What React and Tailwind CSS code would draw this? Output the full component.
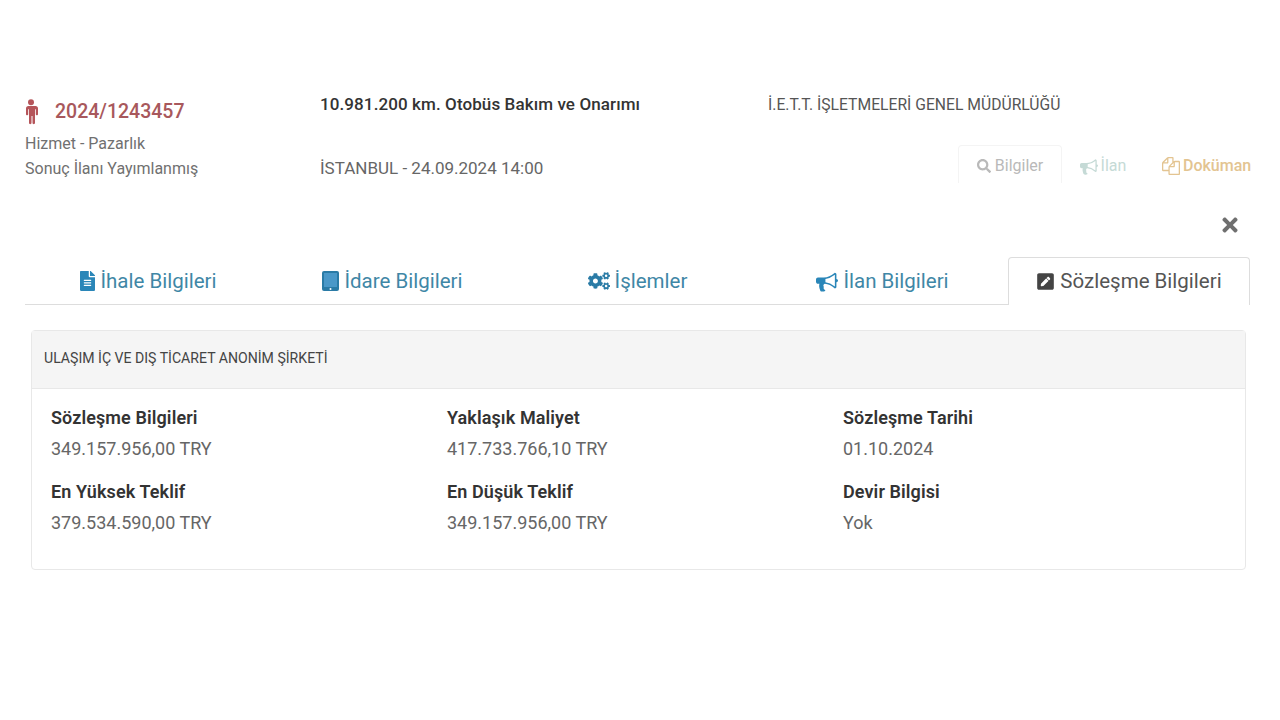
import React from "react";
import { FaFileAlt, FaCogs, FaPenSquare, FaSearch, FaTimes } from "react-icons/fa";

// font awesome 4 shapes, react-icons only ships the newer ones
const BULLHORN = "M1664 736q53 0 90.5 37.5t37.5 90.5-37.5 90.5-90.5 37.5v384q0 52-38 90t-90 38q-417-347-812-380-58 19-91 66t-31 100.5 40 92.5q-20 33-23 65.5t6 58 33.5 55 48 50 61.5 50.5q-29 58-111.5 83t-168.5 11.5-132-55.5q-7-23-29.5-87.5t-32-94.5-23-89-15-101 3.5-98.5 22-110.5h-122q-66 0-113-47t-47-113v-192q0-66 47-113t113-47h480q435 0 896-384 52 0 90 38t38 90v384zm-128 604v-954q-394 302-768 343v270q377 42 768 341z";
const FILES = "M1696 384q40 0 68 28t28 68v1216q0 40-28 68t-68 28h-960q-40 0-68-28t-28-68v-288h-544q-40 0-68-28t-28-68v-672q0-40 20-88t48-76l408-408q28-28 76-48t88-20h416q40 0 68 28t28 68v328q68-40 128-40h416zm-544 213l-299 299h299v-299zm-640-384l-299 299h299v-299zm196 647l316-316v-416h-384v416q0 40-28 68t-68 28h-416v640h512v-256q0-40 20-88t48-76zm956 804v-1152h-384v416q0 40-28 68t-68 28h-416v640h896z";

const Bullhorn = ({ className }) => (
  <svg viewBox="0 0 1792 1792" fill="currentColor" className={className}>
    <path d={BULLHORN} />
  </svg>
);

const Files = ({ className }) => (
  <svg viewBox="0 0 1792 1792" fill="currentColor" className={className}>
    <path d={FILES} />
  </svg>
);

const Male = ({ className }) => (
  <svg viewBox="0 0 16 26" fill="currentColor" className={className}>
    <circle cx="8" cy="3.2" r="3" />
    <path d="M3.5 7h9c1.6 0 2.5 1 2.5 2.5v5.7c0 1.500-2.200 1.500-2.200 0v-5h-.8v13.900c0 1.500-2.500 1.500-2.500 0v-7h-1v7c0 1.500-2.500 1.500-2.500 0v-13.900h-.8v5c0 1.500-2.200 1.500-2.200 0v-5.700c0-1.500.9-2.500 2.500-2.500z" />
  </svg>
);

const Tablet = ({ className }) => (
  <svg viewBox="0 0 17 20" className={className}>
    <rect width="17" height="20" rx="2" fill="#2a7ba6" />
    <rect x="2" y="2" width="13" height="14" fill="#4a98c8" />
    <circle cx="8.500" cy="18" r="1" fill="#ffffff" />
  </svg>
);

const tabs = [
  { label: "İhale Bilgileri", icon: <FaFileAlt className="h-[20px] w-[17px] text-[#2a86b8]" /> },
  { label: "İdare Bilgileri", icon: <Tablet className="h-[20px] w-[17px]" /> },
  { label: "İşlemler", icon: <FaCogs className="h-[20px] w-[22px] text-[#2a7ba6]" /> },
  { label: "İlan Bilgileri", icon: <Bullhorn className="h-[22px] w-[22px] text-[#2a86b8]" /> },
];

const fields = [
  ["Sözleşme Bilgileri", "349.157.956,00 TRY"],
  ["Yaklaşık Maliyet", "417.733.766,10 TRY"],
  ["Sözleşme Tarihi", "01.10.2024"],
  ["En Yüksek Teklif", "379.534.590,00 TRY"],
  ["En Düşük Teklif", "349.157.956,00 TRY"],
  ["Devir Bilgisi", "Yok"],
];

const App = () => {
  return (
    <div className="h-[720px] w-[1280px] overflow-hidden bg-white pt-[93px] font-['Roboto',sans-serif]">
      <div className="flex h-[104px] pl-[25px]">
        <div className="w-[295px]">
          <div className="flex h-[38px] items-center text-[#b5555a]">
            <Male className="ml-[-2px] h-[26px] w-[16px]" />
            <span className="ml-[16px] text-[19.500px] font-medium text-[#a8585c]">2024/1243457</span>
          </div>
          <div className="text-[16px] leading-[25px] text-[#707070]">Hizmet - Pazarlık</div>
          <div className="text-[16px] leading-[25px] text-[#707070]">Sonuç İlanı Yayımlanmış</div>
        </div>
        <div className="w-[448px]">
          <div className="h-[64px] text-[17px] leading-[22px] font-medium tracking-[0.1px] text-[#333333]">10.981.200 km. Otobüs Bakım ve Onarımı</div>
          <div className="text-[17px] leading-[22px] text-[#666666]">İSTANBUL - 24.09.2024 14:00</div>
        </div>
        <div className="flex flex-1 flex-col">
          <div className="h-[52px] pt-[1px] text-[15.7px] leading-[22px] text-[#555555]">İ.E.T.T. İŞLETMELERİ GENEL MÜDÜRLÜĞÜ</div>
          <div className="flex pl-[190px] text-[16px]">
            <div className="flex h-[38px] w-[104px] items-center justify-center gap-[4px] rounded-t border-x border-t border-[#f4f4f4] pt-[3px] text-[#b9b9b9]">
              <FaSearch className="h-[14px] w-[14px]" />
              <span>Bilgiler</span>
            </div>
            <div className="flex h-[38px] w-[82px] items-center justify-center gap-[3px] pt-[3px] text-[#c5dad6]">
              <Bullhorn className="h-[18px] w-[18px]" />
              <span>İlan</span>
            </div>
            <div className="flex h-[38px] items-center gap-[3px] pl-[18px] pt-[3px] text-[#e3c491]">
              <Files className="h-[18px] w-[18px]" />
              <span className="font-medium">Doküman</span>
            </div>
          </div>
        </div>
      </div>

      <div className="flex h-[60px] items-start justify-end pr-[39px] pt-[17px]">
        <FaTimes className="h-[22px] w-[22px] text-[#6f6f6f]" />
      </div>

      <div className="mx-[25px] grid h-[48px] w-[1225px] grid-cols-5 border-b border-[#dddddd]">
        {tabs.map(({ label, icon }) => (
          <div key={label} className="flex items-center justify-center gap-[5px] text-[20.500px] text-[#3f87a6]">
            {icon}
            <span>{label}</span>
          </div>
        ))}
        <div className="ml-[3px] flex h-[48px] items-center justify-center gap-[5px] rounded-t border-x border-t border-[#dddddd] bg-white text-[20.500px] text-[#555555]">
          <FaPenSquare className="h-[19px] w-[19px] text-[#444444]" />
          <span>Sözleşme Bilgileri</span>
        </div>
      </div>

      <div className="mx-[31px] mt-[25px] h-[240px] w-[1215px] rounded border border-[#e8e8e8]">
        <div className="flex h-[58px] items-center border-b border-[#e8e8e8] bg-[#f5f5f5] pb-[2px] pl-[12px] text-[14.100px] text-[#444444]">
          ULAŞIM İÇ VE DIŞ TİCARET ANONİM ŞİRKETİ
        </div>
        <div className="grid grid-cols-[396px_396px_396px] pl-[19px] pt-[16px]">
          {fields.map(([name, value]) => (
            <div key={name} className="h-[74px]">
              <div className="text-[18px] leading-[26px] font-semibold tracking-[0.1px] text-[#333333]">{name}</div>
              <div className="mt-[5px] text-[18px] leading-[26px] text-[#666666]">{value}</div>
            </div>
          ))}
        </div>
      </div>
    </div>
  );
};

export default App;
